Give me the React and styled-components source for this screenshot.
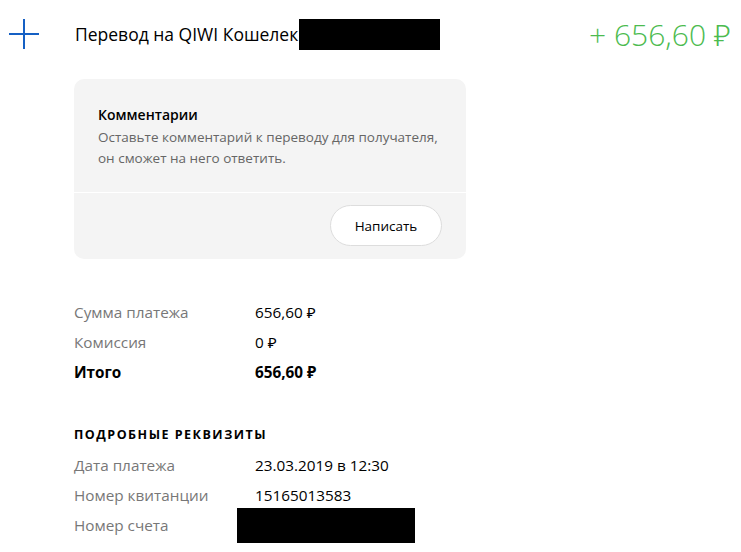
import React from 'react'
import styled, { createGlobalStyle } from 'styled-components'

const GlobalStyle = createGlobalStyle`
    body {
        margin: 0;
        background: #fff;
        font-family: "Open Sans", "Noto Sans", sans-serif;
        color: #000;
    }
`

const Page = styled.div`
    width: 741px;
    height: 552px;
    overflow: hidden;
`

const Header = styled.div`
    display: flex;
    align-items: center;
    height: 68px;
    padding-left: 9px;
    padding-right: 10px;
`

const PlusIcon = styled.svg`
    width: 30px;
    height: 30px;
    flex-shrink: 0;
`

const Title = styled.div`
    margin-left: 36px;
    display: flex;
    align-items: center;
    font-size: 17.5px;
    font-weight: 400;
    color: #000;
    flex: 1;
    white-space: nowrap;
`

const Redacted = styled.span`
    display: inline-block;
    background: #000;
    width: ${p => p.w}px;
    height: ${p => p.h}px;
    margin-left: ${p => p.shift || 0}px;
`

const Amount = styled.div`
    font-size: 30px;
    font-weight: 300;
    color: #4cbb4f;
    white-space: nowrap;
`

const Content = styled.div`
    margin-left: 74px;
    width: 392px;
`

const Card = styled.div`
    margin-top: 11px;
    background: #f4f4f4;
    border-radius: 10px;
    overflow: hidden;
`

const CardBody = styled.div`
    padding: 24px 24px 23px;
    border-bottom: 1px solid #fff;
`

const CardTitle = styled.div`
    font-size: 14px;
    font-weight: 600;
    line-height: 24px;
`

const CardText = styled.div`
    font-size: 13.5px;
    line-height: 21px;
    color: #666;
    white-space: nowrap;
`

const CardFooter = styled.div`
    display: flex;
    justify-content: flex-end;
    padding: 12px 24px 13px;
`

const Button = styled.button`
    height: 41px;
    width: 112px;
    border-radius: 21px;
    border: 1px solid #ddd;
    background: #fff;
    font-family: inherit;
    font-size: 13.5px;
    color: #000;
`

const Group = styled.div`
    margin-top: ${p => p.gap}px;
`

const SectionTitle = styled.div`
    height: 20px;
    line-height: 20px;
    font-size: 12.5px;
    font-weight: 700;
    letter-spacing: 1.5px;
    text-transform: uppercase;
    margin-bottom: 5px;
`

const Row = styled.div`
    display: flex;
    align-items: center;
    height: 30px;
    font-size: 15.3px;
    font-weight: ${p => (p.bold ? 700 : 400)};
    white-space: nowrap;
`

const Label = styled.div`
    width: 181px;
    color: ${p => (p.bold ? '#000' : '#777')};
`

const Value = styled.div`
    color: #000;
    display: flex;
    align-items: center;
`

const App = () => {
    return (
        <>
            <GlobalStyle />
            <Page>
                <Header>
                    <PlusIcon viewBox="0 0 30 30">
                        <path d="M15 0V30M0 15H30" stroke="#1560c4" strokeWidth="2" fill="none" />
                    </PlusIcon>
                    <Title>
                        Перевод на QIWI Кошелек
                        <Redacted w={141} h={31} shift={1} />
                    </Title>
                    <Amount>+ 656,60 ₽</Amount>
                </Header>
                <Content>
                    <Card>
                        <CardBody>
                            <CardTitle>Комментарии</CardTitle>
                            <CardText>
                                Оставьте комментарий к переводу для получателя,<br />
                                он сможет на него ответить.
                            </CardText>
                        </CardBody>
                        <CardFooter>
                            <Button>Написать</Button>
                        </CardFooter>
                    </Card>

                    <Group gap={38}>
                        <Row><Label>Сумма платежа</Label><Value>656,60 ₽</Value></Row>
                        <Row><Label>Комиссия</Label><Value>0 ₽</Value></Row>
                        <Row bold><Label bold>Итого</Label><Value>656,60 ₽</Value></Row>
                    </Group>

                    <Group gap={38}>
                        <SectionTitle>Подробные реквизиты</SectionTitle>
                        <Row><Label>Дата платежа</Label><Value>23.03.2019 в 12:30</Value></Row>
                        <Row><Label>Номер квитанции</Label><Value>15165013583</Value></Row>
                        <Row><Label>Номер счета</Label><Value><Redacted w={178} h={35} shift={-18} /></Value></Row>
                    </Group>
                </Content>
            </Page>
        </>
    )
}

export default App
